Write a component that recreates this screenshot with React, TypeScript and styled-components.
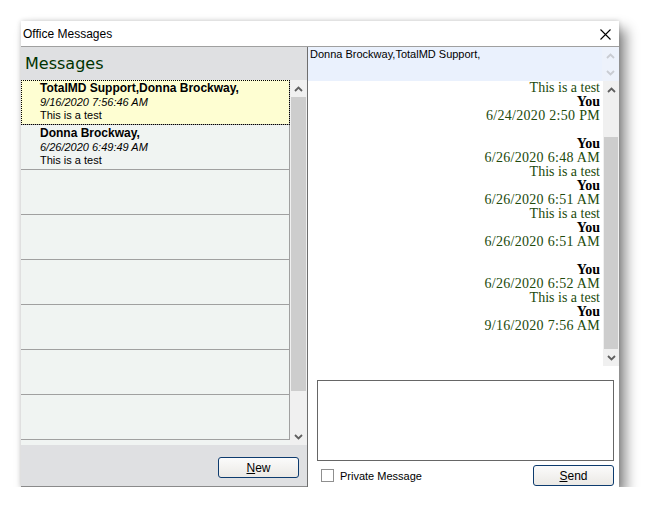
import * as React from "react";
import styled, { createGlobalStyle } from "styled-components";

const GlobalStyle = createGlobalStyle`
  body {
    margin: 0;
    background: #ffffff;
    font-family: "Liberation Sans", Arial, sans-serif;
  }
`;

const Page = styled.div`
  padding: 21px 0 0 21px;
`;

const Window = styled.div`
  width: 598px;
  height: 466px;
  background: #ffffff;
  display: flex;
  flex-direction: column;
  box-shadow: 0 0 5px rgba(0, 0, 0, 0.18), 7px 8px 12px rgba(0, 0, 0, 0.45);
`;

const TitleBar = styled.div`
  height: 25px;
  display: flex;
  align-items: center;
  justify-content: space-between;
  padding: 0 8px 0 2px;
  font-size: 12px;
  color: #000;
  border-bottom: 1px solid #a0a0a0;
`;

const CloseButton = styled.div`
  display: flex;
  align-items: center;
  margin-top: 1px;
`;

const Body = styled.div`
  flex: 1;
  display: grid;
  grid-template-columns: 286px 1px 311px;
  min-height: 0;
`;

const Divider = styled.div`
  background: #6e6e6e;
`;

const LeftPanel = styled.div`
  display: flex;
  flex-direction: column;
  background: #dfe0e2;
  border-bottom: 1px solid #8a8a8a;
`;

const Header = styled.div`
  height: 33px;
  padding-left: 4px;
  display: flex;
  align-items: center;
  font-family: "DejaVu Sans", Verdana, sans-serif;
  font-size: 16px;
  color: #003300;
`;

const ListArea = styled.div`
  height: 365px;
  display: grid;
  grid-template-columns: 269px 17px;
  background: #f0f4f2;
`;

const List = styled.div`
  display: flex;
  flex-direction: column;
`;

const Row = styled.div<{ $selected?: boolean }>`
  height: 45px;
  box-sizing: border-box;
  padding: 1px 0 0 19px;
  background: ${(p) => (p.$selected ? "#fefed2" : "#f0f4f2")};
  border-bottom: 1px solid #a0a0a0;
  border-right: 1px solid #a0a0a0;
  ${(p) =>
    p.$selected &&
    `
    outline: 1px dotted #000;
    outline-offset: -1px;
  `}
`;

const RowName = styled.div`
  font-weight: bold;
  font-size: 12px;
  line-height: 15px;
  color: #000;
`;

const RowDate = styled.div`
  font-style: italic;
  font-size: 11px;
  line-height: 13px;
  color: #000;
`;

const RowText = styled.div`
  font-size: 11px;
  line-height: 13px;
  color: #000;
`;

const ScrollBar = styled.div<{ $bg?: string }>`
  display: flex;
  flex-direction: column;
  background: ${(p) => p.$bg || "#f0f0f0"};
`;

const ScrollButton = styled.div`
  height: 17px;
  display: flex;
  align-items: center;
  justify-content: center;
  flex-shrink: 0;
`;

const Thumb = styled.div<{ $top: number; $height: number }>`
  margin-top: ${(p) => p.$top}px;
  height: ${(p) => p.$height}px;
  background: #cdcdcd;
  margin-left: 1px;
  margin-right: 1px;
`;

const Track = styled.div`
  flex: 1;
`;

const BottomBar = styled.div`
  flex: 1;
  display: flex;
  justify-content: flex-end;
  align-items: flex-start;
  padding: 12px 8px 0 0;
`;

const Button = styled.button<{ $width: number }>`
  width: ${(p) => p.$width}px;
  height: 21px;
  box-sizing: border-box;
  border: 1px solid #0d3b6e;
  border-radius: 3px;
  background: linear-gradient(#fbfbfb, #ebe9e5);
  font-family: "Liberation Sans", Arial, sans-serif;
  font-size: 12px;
  color: #000;
  padding: 0;

  u {
    text-decoration: underline;
  }
`;

const RightPanel = styled.div`
  display: flex;
  flex-direction: column;
`;

const Recipients = styled.div`
  height: 34px;
  display: grid;
  grid-template-columns: 1fr 17px;
  background: #eaf1fd;
`;

const RecipientText = styled.div`
  padding: 0 0 0 2px;
  font-size: 11px;
  line-height: 14px;
  color: #000;
`;

const ChatArea = styled.div`
  height: 285px;
  display: grid;
  grid-template-columns: 1fr 16px;
`;

const ChatLog = styled.div`
  padding-right: 3px;
  text-align: right;
  font-family: "Liberation Serif", Georgia, serif;
  font-size: 14px;
  line-height: 14px;
`;

const ChatLine = styled.div<{ $kind: "text" | "author" | "date" | "blank" }>`
  height: 14px;
  overflow: hidden;
  color: ${(p) => (p.$kind === "author" ? "#000" : "#224a0c")};
  font-weight: ${(p) => (p.$kind === "author" ? "bold" : "normal")};
  letter-spacing: ${(p) => (p.$kind === "date" ? "0.3px" : "0")};
`;

const Composer = styled.div`
  flex: 1;
  display: flex;
  flex-direction: column;
  padding: 14px 5px 0 9px;
`;

const MessageBox = styled.div`
  height: 81px;
  box-sizing: border-box;
  border: 1px solid #666;
  background: #fff;
`;

const ComposerFooter = styled.div`
  display: flex;
  justify-content: space-between;
  align-items: flex-start;
  padding-top: 4px;
`;

const CheckLabel = styled.label`
  display: flex;
  align-items: center;
  gap: 6px;
  padding: 4px 0 0 4px;
  font-size: 11px;
  color: #000;
`;

const CheckBox = styled.span`
  width: 13px;
  height: 13px;
  box-sizing: border-box;
  border: 1px solid #8f8f8f;
  background: #fff;
`;

const Chevron = ({ up, color = "#5f5f5f" }: { up?: boolean; color?: string }) => (
  <svg width="9" height="6" viewBox="0 0 9 6">
    <path
      d={up ? "M1 5 L4.5 1.5 L8 5" : "M1 1 L4.5 4.5 L8 1"}
      fill="none"
      stroke={color}
      strokeWidth="1.8"
    />
  </svg>
);

const rows = [
  { name: "TotalMD Support,Donna Brockway,", date: "9/16/2020 7:56:46 AM", text: "This is a test" },
  { name: "Donna Brockway,", date: "6/26/2020 6:49:49 AM", text: "This is a test" },
];

type Line = { kind: "text" | "author" | "date" | "blank"; value: string };

const chat: Line[] = [
  { kind: "text", value: "This is a test" },
  { kind: "author", value: "You" },
  { kind: "date", value: "6/24/2020 2:50 PM" },
  { kind: "blank", value: "" },
  { kind: "author", value: "You" },
  { kind: "date", value: "6/26/2020 6:48 AM" },
  { kind: "text", value: "This is a test" },
  { kind: "author", value: "You" },
  { kind: "date", value: "6/26/2020 6:51 AM" },
  { kind: "text", value: "This is a test" },
  { kind: "author", value: "You" },
  { kind: "date", value: "6/26/2020 6:51 AM" },
  { kind: "blank", value: "" },
  { kind: "author", value: "You" },
  { kind: "date", value: "6/26/2020 6:52 AM" },
  { kind: "text", value: "This is a test" },
  { kind: "author", value: "You" },
  { kind: "date", value: "9/16/2020 7:56 AM" },
];

const App = () => {
  return (
    <Page>
      <GlobalStyle />
      <Window>
        <TitleBar>
          <span>Office Messages</span>
          <CloseButton>
            <svg width="11" height="11" viewBox="0 0 11 11">
              <path d="M0.5 0.5 L10.5 10.5 M10.5 0.5 L0.5 10.5" stroke="#000" strokeWidth="1.1" />
            </svg>
          </CloseButton>
        </TitleBar>

        <Body>
          <LeftPanel>
            <Header>Messages</Header>
            <ListArea>
              <List>
                {Array.from({ length: 8 }).map((_, i) => {
                  const r = rows[i];
                  return (
                    <Row key={i} $selected={i === 0}>
                      {r && (
                        <>
                          <RowName>{r.name}</RowName>
                          <RowDate>{r.date}</RowDate>
                          <RowText>{r.text}</RowText>
                        </>
                      )}
                    </Row>
                  );
                })}
              </List>
              <ScrollBar>
                <ScrollButton>
                  <Chevron up />
                </ScrollButton>
                <Thumb $top={0} $height={294} />
                <Track />
                <ScrollButton>
                  <Chevron />
                </ScrollButton>
              </ScrollBar>
            </ListArea>
            <BottomBar>
              <Button $width={81}>
                <u>N</u>ew
              </Button>
            </BottomBar>
          </LeftPanel>

          <Divider />

          <RightPanel>
            <Recipients>
              <RecipientText>Donna Brockway,TotalMD Support,</RecipientText>
              <ScrollBar $bg="#edf2fb">
                <ScrollButton>
                  <Chevron up color="#c9ccd2" />
                </ScrollButton>
                <Track />
                <ScrollButton>
                  <Chevron color="#c9ccd2" />
                </ScrollButton>
              </ScrollBar>
            </Recipients>

            <ChatArea>
              <ChatLog>
                {chat.map((l, i) => (
                  <ChatLine key={i} $kind={l.kind}>
                    {l.value}
                  </ChatLine>
                ))}
              </ChatLog>
              <ScrollBar>
                <ScrollButton>
                  <Chevron up />
                </ScrollButton>
                <Thumb $top={39} $height={212} />
                <Track />
                <ScrollButton>
                  <Chevron />
                </ScrollButton>
              </ScrollBar>
            </ChatArea>

            <Composer>
              <MessageBox />
              <ComposerFooter>
                <CheckLabel>
                  <CheckBox />
                  Private Message
                </CheckLabel>
                <Button $width={81}>
                  <u>S</u>end
                </Button>
              </ComposerFooter>
            </Composer>
          </RightPanel>
        </Body>
      </Window>
    </Page>
  );
};

export default App;
